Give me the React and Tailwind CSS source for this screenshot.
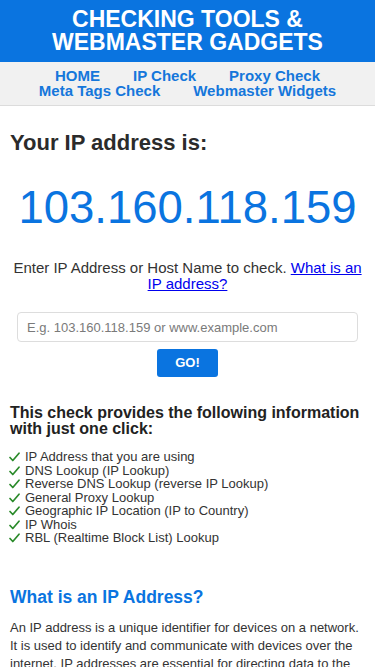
import React from "react";

const navLinks = ["HOME", "IP Check", "Proxy Check", "Meta Tags Check", "Webmaster Widgets"];

const features = [
  "IP Address that you are using",
  "DNS Lookup (IP Lookup)",
  "Reverse DNS Lookup (reverse IP Lookup)",
  "General Proxy Lookup",
  "Geographic IP Location (IP to Country)",
  "IP Whois",
  "RBL (Realtime Block List) Lookup",
];

const Check = () => (
  <svg width="11" height="10" viewBox="0 0 11 10" className="shrink-0 mt-[2px] mr-[5px] ml-[-1px]">
    <path d="M1 5.5 L3.8 8.5 L10 1.2" fill="none" stroke="#2a8a2a" strokeWidth="1.7" strokeLinecap="round" strokeLinejoin="round" />
  </svg>
);

const App = () => {
  return (
    <div className="min-h-screen bg-white text-[#333] font-['Liberation_Sans',Arial,sans-serif]">
      <header className="bg-[#0a74e0] py-2 text-center">
        <h1 className="text-[23px] leading-[23px] font-bold uppercase text-white">
          Checking Tools &amp;
          <br />
          Webmaster Gadgets
        </h1>
      </header>

      <nav className="bg-[#f1f1f1] border-b border-[#dcdcdc] pt-[6px] pb-[7px]">
        <ul className="flex flex-wrap justify-center gap-x-[33px] text-[15px] leading-[15px] font-bold">
          {navLinks.map((link) => (
            <li key={link}>
              <a href="#" className="text-[#1577db]">
                {link}
              </a>
            </li>
          ))}
        </ul>
      </nav>

      <main className="px-[10px]">
        <h2 className="mt-[24px] text-[22px] leading-[26px] font-bold text-[#2b2b2b]">
          Your IP address is:
        </h2>
        <p className="mt-[29px] text-center text-[45.5px] leading-[45px] text-[#0a74e0]">
          103.160.118.159
        </p>

        <p className="mt-[30px] text-center text-[15px] leading-[16px] text-[#333]">
          Enter IP Address or Host Name to check.{" "}
          <a href="#" className="text-[#0000ee] underline">
            What is an IP address?
          </a>
        </p>

        <form className="mt-[20px] flex flex-col items-center" onSubmit={(e) => e.preventDefault()}>
          <input
            type="text"
            placeholder="E.g. 103.160.118.159 or www.example.com"
            className="w-[341px] h-[30px] rounded-[4px] border border-[#dddddd] pl-[9px] text-[13px] text-[#333] placeholder:text-[#7a7a7a] outline-none"
          />
          <button
            type="submit"
            className="mt-[7px] w-[61px] h-[28px] rounded-[3px] bg-[#0a74e0] text-white text-[13px] font-bold"
          >
            GO!
          </button>
        </form>

        <h3 className="mt-[28px] text-[16px] leading-[16px] font-bold text-[#222]">
          This check provides the following information with just one click:
        </h3>
        <ul className="mt-[13px] text-[13px] leading-[13.5px] text-[#333]">
          {features.map((item) => (
            <li key={item} className="flex items-start">
              <Check />
              <span>{item}</span>
            </li>
          ))}
        </ul>

        <h2 className="mt-[42px] text-[17.5px] leading-[20px] font-bold text-[#0a74e0]">
          What is an IP Address?
        </h2>
        <p className="mt-[12px] text-[13px] leading-[18px] text-[#333]">
          An IP address is a unique identifier for devices on a network. It is used to identify and
          communicate with devices over the internet. IP addresses are essential for directing data to the
          correct destination.
        </p>
      </main>
    </div>
  );
};

export default App;
